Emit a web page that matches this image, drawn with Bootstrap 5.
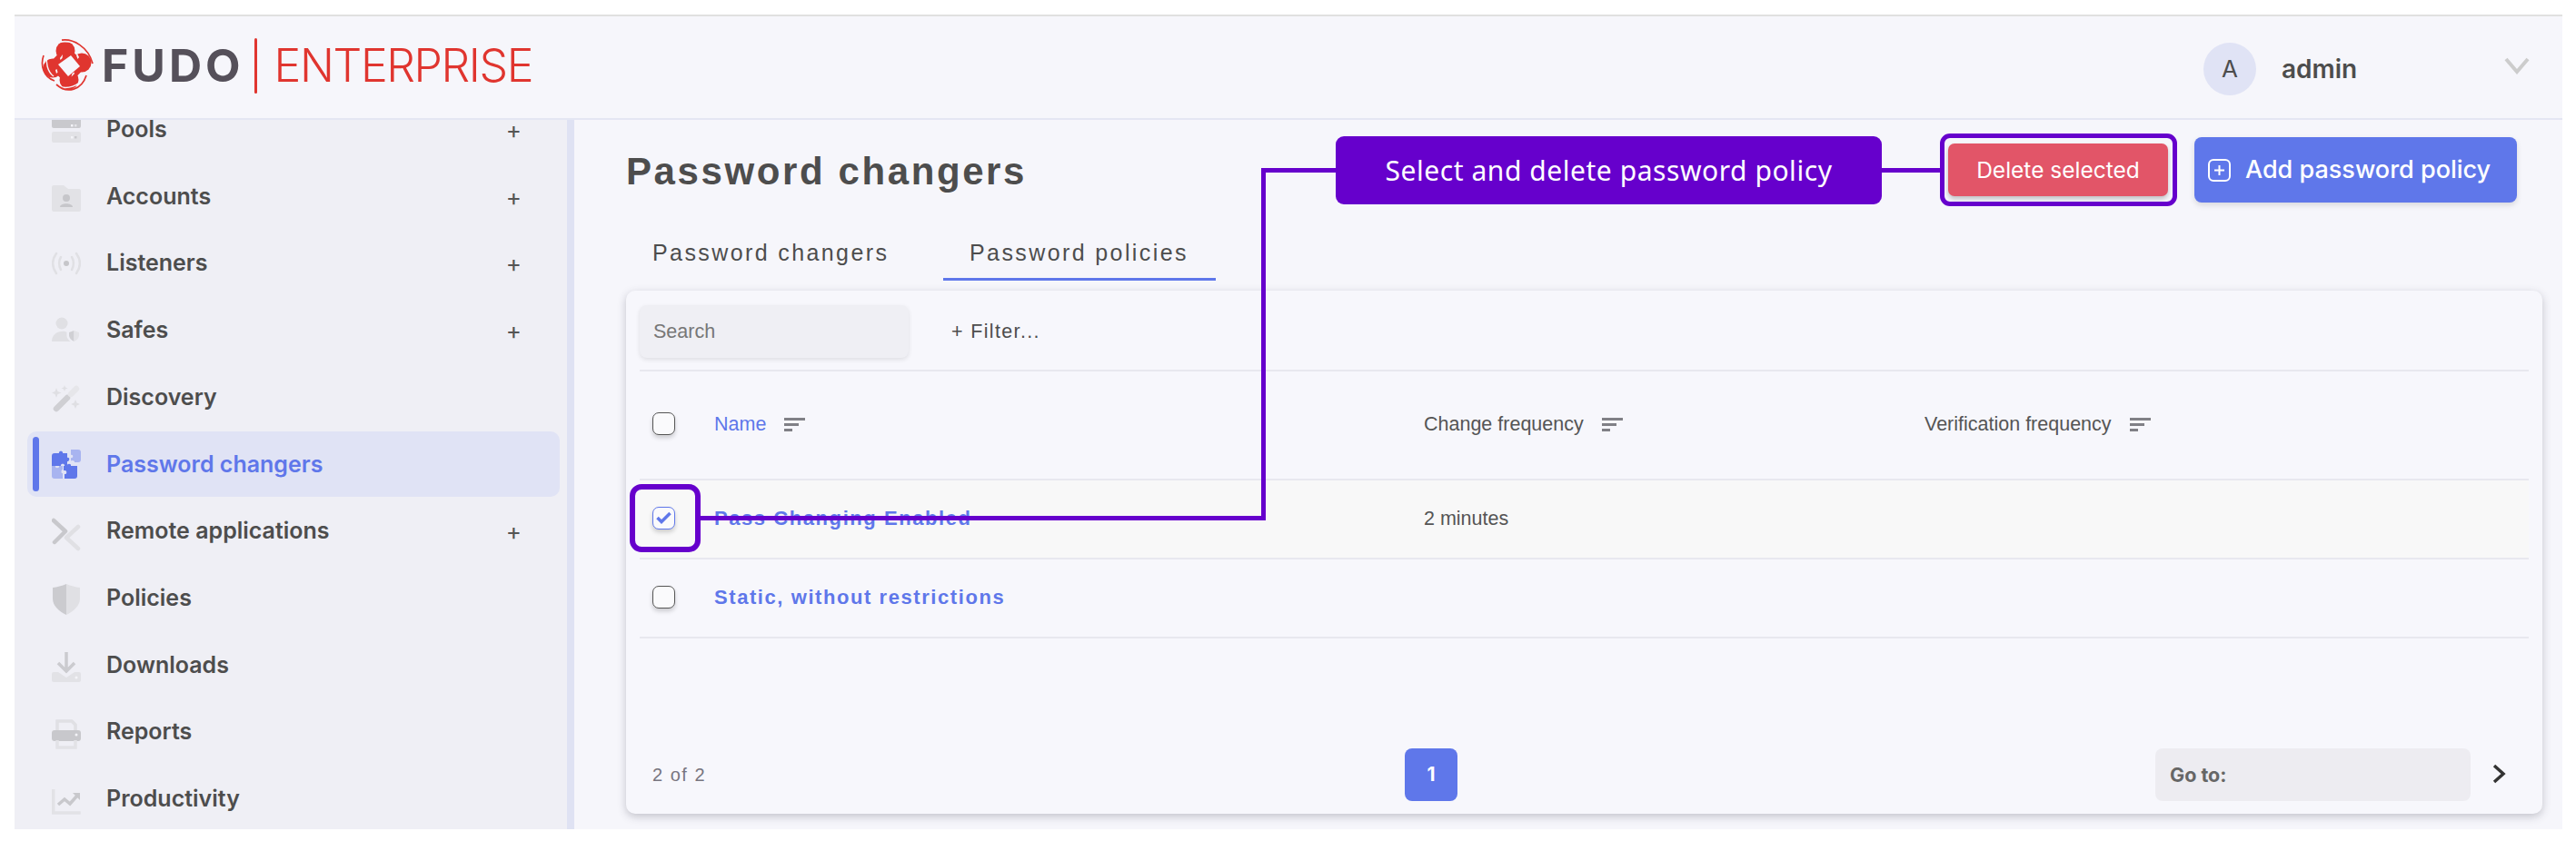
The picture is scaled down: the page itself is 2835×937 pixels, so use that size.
<!DOCTYPE html>
<html lang="en">
<head>
<meta charset="utf-8">
<title>Password changers</title>
<link href="https://cdn.jsdelivr.net/npm/bootstrap@5.3.0/dist/css/bootstrap.min.css" rel="stylesheet">
<style>
html,body{height:100%;background:#fff;overflow:hidden}
body{font-family:Inter,"Liberation Sans",sans-serif;color:#4d4d4d}
.frame{margin:16px 0 0 16px;width:2804px;height:897px;background:#f6f6fb;border-top:2px solid #e0e0e0;overflow:hidden}
.topbar{height:114px;border-bottom:2px solid #e4e6f3;background:#f6f6fb;position:relative;z-index:2;flex:none}
.brand{padding-left:29px;margin-top:-4px}
.brand-icon{width:58px;height:58px;flex:none}
.fudo{font:700 50px/1 Inter,sans-serif;color:#55505a;margin-left:9px;letter-spacing:4px}
.brand-sep{width:3px;height:61px;background:#e0352f;margin:0 19px 0 11px;border-radius:2px}
.ent{font:300 50px/1 Inter,sans-serif;color:#e0352f;letter-spacing:-1.4px}
.usr{margin-top:3px}
.avatar{width:58px;height:58px;background:#e0e3f5;font-size:26px;margin-right:28px}
.uname{font-size:28px;font-weight:600;width:245px}
.chev{width:28px;height:19px;margin-right:36px;margin-top:-6px}
.shell{height:781px}
.side{width:616px;flex:none;background:#efeff5;border-right:8px solid #dfe2f3;padding:0 8px 0 14px;overflow:hidden}
.side-list{margin-top:-25px}
.sitem{height:71.7px;margin-bottom:2px;padding-left:27px;padding-right:42px;font-size:25px;font-weight:600;color:#4d4d4d;position:relative;border-radius:10px}
.sitem.on{background:#e0e3f5;color:#5f77ea}
.sitem.on::before{content:"";position:absolute;left:6px;top:6px;bottom:6px;width:7px;border-radius:4px;background:#5f77ea}
.sico{width:32px;height:44px;flex:none;margin-right:28px}
.plus{font-size:26px;font-weight:400;color:#555;line-height:1}
.content{padding:19px 22px 0 57px;position:relative;min-width:0}
.headrow{height:72px;padding-right:28px}
.title{font:700 42px/1 "Liberation Sans",sans-serif;letter-spacing:2.6px;margin:3px 0 0;color:#4d4d4d}
.tabs{margin-top:37px;height:49px}
.tabx{font:400 25px/37px "Liberation Sans",sans-serif;letter-spacing:2.4px;color:#4d4d4d;height:49px}
.tabx.first{padding-left:29px;width:349px}
.tabx.on{border-bottom:3px solid #5f77ea;width:300px;padding-left:29px}
.panel{margin-top:11px;width:2109px;height:576px;background:#f7f7fc;border-radius:10px;box-shadow:0 3px 10px rgba(60,60,80,.28);padding:0 15px;position:relative}
.toolbar{height:89px;border-bottom:2px solid #e8e8ef;padding-top:16px}
.searchbox{width:296px;height:58px;background:#efeff4;border-radius:8px;box-shadow:0 2px 5px rgba(0,0,0,.1);color:#777;font:400 21.5px/59px "Liberation Sans",sans-serif;padding:0 15px}
.filt{font:400 21.5px/59px "Liberation Sans",sans-serif;color:#4d4d4d;margin-left:47px;letter-spacing:1.35px}
.drow{height:87px;border-bottom:2px solid #e8e8ef}
.drow.head{height:120px}
.drow.sel{background:#f8f8f8}
.cbx{width:25px;height:25px;border:1.5px solid #555;border-radius:7px;background:#fafafc;box-shadow:0 3px 5px rgba(0,0,0,.18);margin-left:14px;margin-right:43px;flex:none;margin-top:-3px}
.cbx.chk{border-color:#5f77ea}
.namecol{width:781px;flex:none}
.chgcol{width:551px;flex:none}
.thead{font:400 21.5px/1.2 "Liberation Sans",sans-serif;color:#555}
.sortico{width:23px;height:16px;margin-left:20px;flex:none}
.linkb{color:#5f77ea;font:700 22px/1.2 "Liberation Sans",sans-serif;letter-spacing:1.57px;text-decoration:none}
.nm{color:#5f77ea}
.pager{position:absolute;left:15px;right:15px;bottom:14px;height:58px}
.cnt{font:400 20px/1 "Liberation Sans",sans-serif;color:#77757f;letter-spacing:1.5px;padding-left:14px;width:842px;flex:none}
.pg1{width:58px;height:58px;background:#5f77ea;border-radius:8px;color:#fff;font-weight:700;font-size:21px}
.goto{width:347px;height:58px;background:#edecf1;border-radius:8px;padding-left:16px;font-size:21.5px;font-weight:700;color:#666;margin-left:768px}
.nxt{width:16px;height:22px;margin-left:23px;margin-top:-2px}
.callout{position:absolute;background:#6600cc;color:#fff;border-radius:9px;font:400 30px/1 "Noto Sans",sans-serif;letter-spacing:.55px;left:838px;top:18px;width:601px;height:75px;z-index:3}
.btn.dels{background:#e25568;border:0;color:#fff;font-size:24.5px;width:242px;height:58px;border-radius:7px;box-shadow:0 3px 5px rgba(0,0,0,.22);padding:0;margin-right:29px}
.btn.addp{background:#5f77ea;border:0;color:#fff;font-size:27px;width:355px;height:72px;border-radius:8px;box-shadow:0 3px 6px rgba(0,0,0,.12);padding:0 0 0 15px;font-weight:500}
.plussq{width:25px;height:25px;margin-right:16px;flex:none}
.markbox{position:absolute;border:5px solid #6600cc;z-index:4;border-radius:11px;background:transparent}
.mk-del{left:1503px;top:15px;width:261px;height:80px}
.mk-chk{left:61px;top:401px;width:78px;height:75px;border-width:6px;border-radius:13px}
.ln{position:absolute;background:#6600cc;z-index:4}
.ln-a{left:1439px;top:53px;width:65px;height:5px}
.ln-b{left:756px;top:53px;width:83px;height:5px}
.ln-c{left:756px;top:53px;width:5px;height:388px}
.ln-d{left:138px;top:436px;width:623px;height:5px}
</style>
</head>
<body>
<div class="frame d-flex flex-column">
  <header class="topbar d-flex align-items-center justify-content-between">
    <div class="brand d-flex align-items-center">
      <svg class="brand-icon" viewBox="0 0 58 58"><g fill="#e0352f"><circle cx="27" cy="13" r="10.500"/><circle cx="45" cy="26" r="10.500"/><circle cx="31" cy="45" r="10.500"/><circle cx="13" cy="32" r="10.500"/><path d="M28 7 51 29 30 51 7 29Z"/></g><path d="M33 18 43 30 30 41 19 28Z" fill="#f6f6fb"/><g fill="#f6f6fb"><path d="M21 21l3-4-.5 4-2 2ZM40 16l2 4-1.500 2-1.500-4ZM17 38l-1-4 1.500-1 1 3.500ZM37 38l-3.500 3.500 1-3.500 2-1.500Z"/></g><g fill="none" stroke="#f6f6fb" stroke-width="1.500"><path d="M20 3.500c10-2 22 1 28 9M7 17c-2 8 0 19 7 24M18 51.500c11 5 24 0 31-10"/></g><g fill="none" stroke="#e0352f" stroke-width="1.700"><path d="M23 1.200C35-.5 52 8 57 27M3 18C-1 29 3 42 15 46M17 50c12 11 28 6 33-10"/></g></svg>
      <span class="fudo">FUDO</span><span class="brand-sep"></span><span class="ent">ENTERPRISE</span>
    </div>
    <div class="usr d-flex align-items-center">
      <span class="avatar rounded-circle d-flex align-items-center justify-content-center">A</span>
      <span class="uname">admin</span>
      <svg class="chev" viewBox="0 0 28 19" fill="none"><path d="M2 2 14 16 26 2" stroke="#ccc" stroke-width="4"/></svg>
    </div>
  </header>
  <div class="shell d-flex flex-grow-1">
    <nav class="side">
      <div class="side-list">
        <div class="sitem d-flex align-items-center"><svg class="sico" viewBox="0 0 32 44"><rect y="6" width="32" height="14" rx="2" fill="#c9c9cd"/><rect y="24" width="32" height="12" rx="2" fill="#e2e2e6"/><rect x="21" y="16" width="2.500" height="2.500" fill="#f4f4f8"/><rect x="25" y="16" width="2.500" height="2.500" fill="#e4e4e8"/><rect x="21" y="29" width="2.500" height="2.500" fill="#f4f4f8"/><rect x="25" y="29" width="2.500" height="2.500" fill="#c9c9cd"/></svg><span class="flex-grow-1">Pools</span><span class="plus">+</span></div>
        <div class="sitem d-flex align-items-center"><svg class="sico" viewBox="0 0 32 44"><path d="M2 9h11l5 4h12a2 2 0 0 1 2 2v21a2 2 0 0 1-2 2H2a2 2 0 0 1-2-2V11a2 2 0 0 1 2-2Z" fill="#e2e2e6"/><circle cx="16" cy="23" r="4" fill="#c6c6ca"/><path d="M9 33c0-5 14-5 14 0Z" fill="#c6c6ca"/></svg><span class="flex-grow-1">Accounts</span><span class="plus">+</span></div>
        <div class="sitem d-flex align-items-center"><svg class="sico" viewBox="0 0 32 44" fill="none" stroke="#e0e0e4" stroke-width="2.500" stroke-linecap="round"><path d="M5 11c-5 7-5 15 0 22M27 11c5 7 5 15 0 22"/><path d="M10 15c-2.500 4-2.500 10 0 14M22 15c2.500 4 2.500 10 0 14"/><circle cx="16" cy="22" r="3" fill="#c6c6ca" stroke="none"/></svg><span class="flex-grow-1">Listeners</span><span class="plus">+</span></div>
        <div class="sitem d-flex align-items-center"><svg class="sico" viewBox="0 0 32 44"><circle cx="11" cy="14" r="6.500" fill="#e0e0e4"/><path d="M0 34c0-14 20-14 22-5v5Z" fill="#e0e0e4"/><path d="M16.500 23l8-3 7.500 3v5c0 3-3 6-7.500 8-4.500-2-8-5-8-8Z" fill="#efeff5"/><path d="M24.500 22v12c-3-1.500-5.500-4-5.500-6.500V24Z" fill="#d0d0d4"/><path d="M24.500 22v12c3-1.500 5.500-4 5.500-6.500V24Z" fill="#e4e4e8"/></svg><span class="flex-grow-1">Safes</span><span class="plus">+</span></div>
        <div class="sitem d-flex align-items-center"><svg class="sico" viewBox="0 0 32 44" fill="none"><path d="M5 34 17 22" stroke="#cfcfd3" stroke-width="6.500" stroke-linecap="round"/><path d="M21 18 27 12" stroke="#e6e6ea" stroke-width="6.500" stroke-linecap="round"/><path d="M5 11l1.500 4 4 1.500-4 1.500L5 22l-1.500-4-3.500-1.500 3.500-1.500ZM14 8l1 2.500 2.500 1-2.500 1L14 15l-1-2.500-2.500-1 2.500-1ZM26 24l1.500 3.500 3.500 1.500-3.500 1.500L26 34l-1.500-3.500L21 29l3.500-1.500Z" fill="#dfdfe3"/></svg><span class="flex-grow-1">Discovery</span></div>
        <div class="sitem on d-flex align-items-center"><svg class="sico" viewBox="0 0 32 44"><path d="M3 10h5c-1-3 5-3 4 0h5v5c3-1 3 4 0 4v5h-3c1-3-5-3-4 0H0V13a3 3 0 0 1 3-3Z" fill="#5f77ea"/><path d="M21 6h8a3 3 0 0 1 3 3v8a3 3 0 0 1-3 3h-4c1-2-4-3-4-1v-4c3 1 3-4 0-3Z" fill="#a8b4f0"/><path d="M0 24h4c-1 3 5 3 4 0h4v4c-2 0-2 5 0 4v6H3a3 3 0 0 1-3-3Z" fill="#a8b4f0"/><path d="M13 24h4c-1-3 5-3 4 0h7v11a3 3 0 0 1-3 3H14v-5c3 1 3-5 0-4h-1Z" fill="#5f77ea"/></svg><span class="flex-grow-1">Password changers</span></div>
        <div class="sitem d-flex align-items-center"><svg class="sico" viewBox="0 0 32 44" fill="none" stroke-width="4.500" stroke-linecap="round" stroke-linejoin="round"><path d="M2 10 15 22 3 34" stroke="#c8c8cc"/><path d="M29 17 16 29 29 41" stroke="#e0e0e4"/></svg><span class="flex-grow-1">Remote applications</span><span class="plus">+</span></div>
        <div class="sitem d-flex align-items-center"><svg class="sico" viewBox="0 0 32 44"><path d="M16 6c5 2 10 3.500 15 4v12c0 8-7 14-15 18Z" fill="#e0e0e4"/><path d="M16 6C11 8 6 9.500 1 10v12c0 8 7 14 15 18Z" fill="#cbcbcf"/></svg><span class="flex-grow-1">Policies</span></div>
        <div class="sitem d-flex align-items-center"><svg class="sico" viewBox="0 0 32 44"><path d="M16 8v21M7 20l9 9 9-9" fill="none" stroke="#cbcbcf" stroke-width="3.500"/><path d="M2 30h5l9 6 9-6h5a2 2 0 0 1 2 2v7a2 2 0 0 1-2 2H2a2 2 0 0 1-2-2v-7a2 2 0 0 1 2-2Z" fill="#e2e2e6"/><circle cx="27" cy="36" r="1.500" fill="#f4f4f8"/></svg><span class="flex-grow-1">Downloads</span></div>
        <div class="sitem d-flex align-items-center"><svg class="sico" viewBox="0 0 32 44"><path d="M6 22V10h16l4 4v8" fill="none" stroke="#e0e0e4" stroke-width="3.500"/><rect y="20" width="32" height="12" rx="3" fill="#c8c8cc"/><circle cx="27" cy="25" r="1.500" fill="#f4f4f8"/><path d="M6 31v8h20v-8" fill="none" stroke="#e2e2e6" stroke-width="3.500"/></svg><span class="flex-grow-1">Reports</span></div>
        <div class="sitem d-flex align-items-center"><svg class="sico" viewBox="0 0 32 44" fill="none"><path d="M1.700 11v26h30" stroke="#e2e2e6" stroke-width="3.500"/><path d="M7 28l7-6 6 5 8-9" stroke="#c8c8cc" stroke-width="3.500"/><path d="M23 15h8v8Z" fill="#c8c8cc"/></svg><span class="flex-grow-1">Productivity</span></div>
      </div>
    </nav>
    <main class="content flex-grow-1">
      <div class="headrow d-flex align-items-center">
        <h1 class="title me-auto">Password changers</h1>
        <button class="btn dels" type="button">Delete selected</button>
        <button class="btn addp d-flex align-items-center" type="button"><svg class="plussq" viewBox="0 0 25 25" fill="none" stroke="#fff" stroke-width="2"><rect x="1" y="1" width="23" height="23" rx="5"/><path d="M12.500 7v11M7 12.500h11"/></svg>Add password policy</button>
      </div>
      <div class="tabs d-flex align-items-start">
        <div class="tabx first">Password changers</div>
        <div class="tabx on">Password policies</div>
      </div>
      <section class="panel">
        <div class="toolbar d-flex align-items-start">
          <div class="searchbox">Search</div>
          <div class="filt">+ Filter...</div>
        </div>
        <div class="drow head thead d-flex align-items-center">
          <span class="cbx"></span>
          <div class="namecol d-flex align-items-center"><span class="nm">Name</span><svg class="sortico" viewBox="0 0 23 16" fill="#808086"><rect width="23" height="3"/><rect y="6" width="16" height="3"/><rect y="12" width="9" height="3"/></svg></div>
          <div class="chgcol d-flex align-items-center"><span>Change frequency</span><svg class="sortico" viewBox="0 0 23 16" fill="#808086"><rect width="23" height="3"/><rect y="6" width="16" height="3"/><rect y="12" width="9" height="3"/></svg></div>
          <div class="d-flex align-items-center"><span>Verification frequency</span><svg class="sortico" viewBox="0 0 23 16" fill="#808086"><rect width="23" height="3"/><rect y="6" width="16" height="3"/><rect y="12" width="9" height="3"/></svg></div>
        </div>
        <div class="drow sel d-flex align-items-center">
          <span class="cbx chk d-flex align-items-center justify-content-center"><svg width="17" height="14" viewBox="0 0 17 14" fill="none"><path d="M1.500 7l4.500 4.500L15.500 2" stroke="#5f77ea" stroke-width="3.500"/></svg></span>
          <div class="namecol"><a class="linkb" href="#">Pass Changing Enabled</a></div>
          <div class="chgcol thead">2 minutes</div>
        </div>
        <div class="drow d-flex align-items-center">
          <span class="cbx"></span>
          <div class="namecol"><a class="linkb" href="#">Static, without restrictions</a></div>
        </div>
        <div class="pager d-flex align-items-center">
          <div class="cnt">2 of 2</div>
          <div class="pg1 d-flex align-items-center justify-content-center">1</div>
          <div class="goto d-flex align-items-center">Go to:</div>
          <svg class="nxt" viewBox="0 0 16 22" fill="none"><path d="M3 2l10 9-10 9" stroke="#333" stroke-width="3.500"/></svg>
        </div>
      </section>
      <div class="callout d-flex align-items-center justify-content-center">Select and delete password policy</div>
      <div class="markbox mk-del"></div>
      <div class="markbox mk-chk"></div>
      <div class="ln ln-a"></div>
      <div class="ln ln-b"></div>
      <div class="ln ln-c"></div>
      <div class="ln ln-d"></div>
    </main>
  </div>
</div>
</body>
</html>
